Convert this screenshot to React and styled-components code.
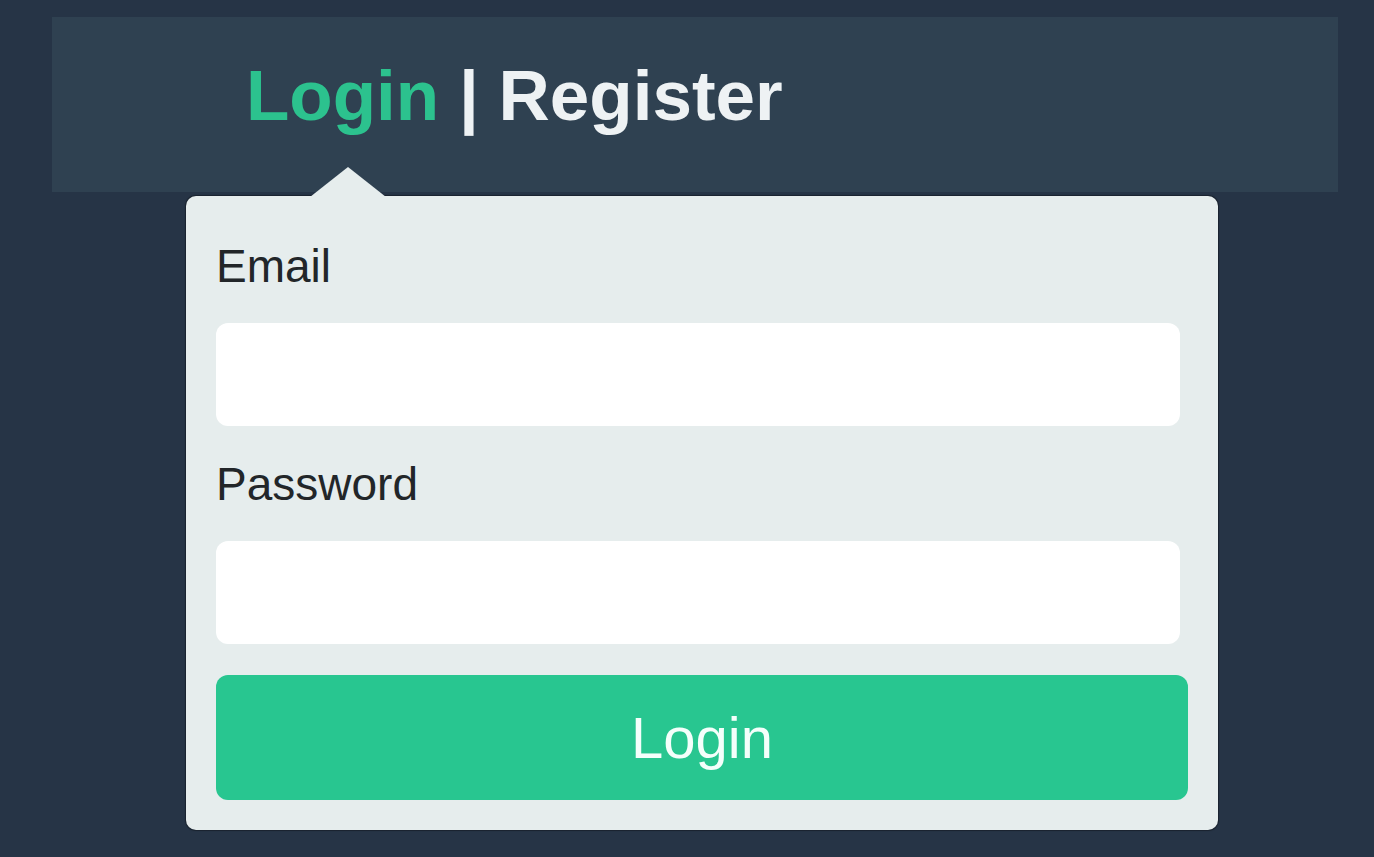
import styled, { createGlobalStyle } from 'styled-components'

const colors = {
  page: '#263446',
  header: '#2f4151',
  card: '#e6eded',
  green: '#28c690',
  greenText: '#2cc28e',
  label: '#222629',
}

const GlobalStyle = createGlobalStyle`
  html, body {
    margin: 0;
    padding: 0;
    background: ${colors.page};
    font-family: 'Liberation Sans', Arial, sans-serif;
  }
  #root {
    min-height: 857px;
  }
`

const Page = styled.div`
  padding-top: 17px;
  min-height: 857px;
  box-sizing: border-box;
`

const Header = styled.header`
  margin: 0 36px 0 52px;
  height: 175px;
  background: ${colors.header};
  display: flex;
  align-items: center;
  padding-left: 194px;
  box-sizing: border-box;
`

const Tabs = styled.h1`
  margin: -18px 0 0;
  font-size: 71px;
  font-weight: bold;
  line-height: 1;
  color: #eef2f4;
  white-space: pre;
`

const Tab = styled.span`
  color: ${({ $active }) => ($active ? colors.greenText : '#eef2f4')};
`

const Card = styled.form`
  position: relative;
  margin: 4px 0 0 186px;
  width: 1032px;
  background: ${colors.card};
  border-radius: 10px;
  box-shadow: 0 0 1px 1px rgba(0, 0, 0, 0.35);
  padding: 44px 30px 30px;
  box-sizing: border-box;
  display: flex;
  flex-direction: column;

  &::before {
    content: '';
    position: absolute;
    top: -29px;
    left: 124px;
    border-left: 38px solid transparent;
    border-right: 38px solid transparent;
    border-bottom: 30px solid ${colors.card};
  }
`

const Label = styled.label`
  font-size: 46px;
  line-height: 52px;
  color: ${colors.label};
  margin-top: ${({ $first }) => ($first ? '0' : '32px')};
`

const Input = styled.input`
  margin-top: 31px;
  width: 964px;
  height: 103px;
  border: none;
  border-radius: 12px;
  background: #ffffff;
  outline: none;
  box-sizing: border-box;
  padding: 0 20px;
  font-size: 40px;
  font-family: inherit;
`

const Button = styled.button`
  margin-top: 31px;
  height: 125px;
  width: 100%;
  border: none;
  border-radius: 12px;
  background: ${colors.green};
  color: #f4fffb;
  font-family: inherit;
  font-size: 58px;
  cursor: pointer;
`

const App = () => {
  return (
    <Page>
      <GlobalStyle />
      <Header>
        <Tabs>
          <Tab $active>Login</Tab> | <Tab>Register</Tab>
        </Tabs>
      </Header>
      <Card onSubmit={(e) => e.preventDefault()}>
        <Label $first htmlFor="email">
          Email
        </Label>
        <Input id="email" type="email" />
        <Label htmlFor="password">Password</Label>
        <Input id="password" type="password" />
        <Button type="submit">Login</Button>
      </Card>
    </Page>
  )
}

export default App
